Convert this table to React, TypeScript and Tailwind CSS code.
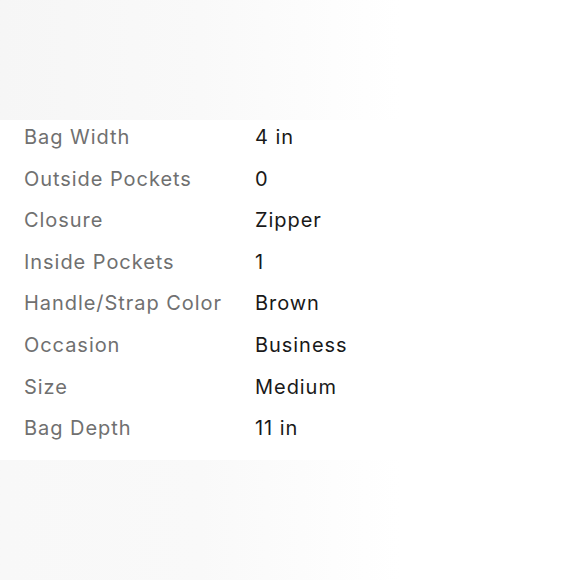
const specs = [
  { label: 'Bag Width', value: '4 in' },
  { label: 'Outside Pockets', value: '0' },
  { label: 'Closure', value: 'Zipper' },
  { label: 'Inside Pockets', value: '1' },
  { label: 'Handle/Strap Color', value: 'Brown' },
  { label: 'Occasion', value: 'Business' },
  { label: 'Size', value: 'Medium' },
  { label: 'Bag Depth', value: '11 in' },
];

export default function App() {
  return (
    <div className="w-[580px] h-[580px] bg-white flex flex-col overflow-hidden font-['Inter',sans-serif]">
      {/* blurred background above */}
      <div className="h-[120px] w-[400px] bg-gradient-to-r from-[#f6f6f6] via-[#f9f9f9] to-white" />

      {/* item specifics */}
      <div className="w-[396px] h-[340px] bg-white pt-[5px] pl-6">
        {specs.map((s) => (
          <div key={s.label} className="flex h-[41.6px] tracking-[0.95px]">
            <span className="w-[231px] text-[20px] leading-6 text-[#707070]">{s.label}</span>
            <span className="text-[20px] leading-6 text-[#191919]">{s.value}</span>
          </div>
        ))}
      </div>

      {/* blurred background below */}
      <div className="flex-1 w-[400px] bg-gradient-to-r from-[#f8f8f8] via-[#f9f9f9] to-white" />
    </div>
  );
}
